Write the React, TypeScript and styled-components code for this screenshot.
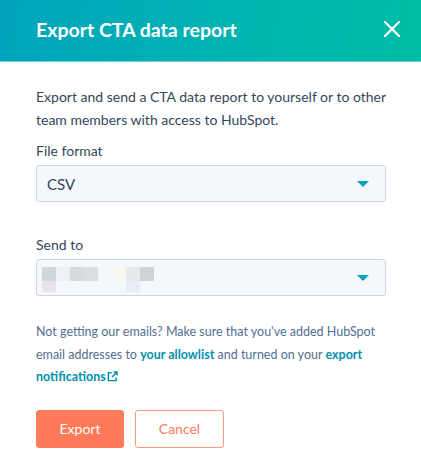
import React from "react";
import styled, { createGlobalStyle } from "styled-components";

const Global = createGlobalStyle`
  html, body { margin: 0; padding: 0; background: #fff; }
  body { font-family: Lato, "Open Sans", sans-serif; color: #33475b; }
  * { box-sizing: border-box; }
`;

const Dialog = styled.div`
  width: 421px;
  height: 470px;
  background: #fff;
  display: flex;
  flex-direction: column;
`;

const Header = styled.div`
  height: 62px;
  flex: none;
  background: linear-gradient(100deg, #00a4bd 0%, #00b5b0 60%, #00bda5 100%);
  border-bottom: 1px solid #6fd0d8;
  display: flex;
  align-items: center;
  justify-content: space-between;
  padding: 0 20px 3px 36px;
`;

const Title = styled.h1`
  margin: 0;
  font-size: 19.5px;
  font-weight: 700;
  color: #fff;
`;

const Close = styled.button`
  border: 0;
  background: transparent;
  padding: 0;
  width: 18px;
  height: 18px;
  display: flex;
  align-items: center;
  justify-content: center;
  cursor: pointer;
`;

const Body = styled.div`
  padding: 23px 35px 0 36px;
  display: flex;
  flex-direction: column;
`;

const Intro = styled.p`
  margin: 0;
  font-size: 14px;
  line-height: 23px;
  color: #33475b;
`;

const Label = styled.div<{ $top: number }>`
  margin-top: ${(p) => p.$top}px;
  font-size: 14px;
  line-height: 20px;
  color: #33475b;
`;

const Select = styled.div`
  margin-top: 4px;
  height: 37px;
  border: 1px solid #cbd6e2;
  border-radius: 3px;
  background: #f5f8fa;
  display: flex;
  align-items: center;
  justify-content: space-between;
  padding: 0 16px 0 10px;
  font-size: 15px;
  color: #33475b;
`;

const Caret = styled.span`
  width: 0;
  height: 0;
  border-left: 6px solid transparent;
  border-right: 6px solid transparent;
  border-top: 6px solid #00a4bd;
  margin-top: 1px;
`;

const Redacted = styled.div`
  align-self: flex-start;
  display: grid;
  grid-template-columns: repeat(8, 14px);
  grid-template-rows: 14px 11px;
  margin-top: 7px;
  margin-left: -5px;
`;

const Px = styled.div<{ $c: string }>`
  background: ${(p) => p.$c};
`;

const Note = styled.p`
  margin: 25px 0 0;
  font-size: 12.5px;
  line-height: 22.5px;
  color: #516f90;
`;

const Link = styled.a`
  color: #0091ae;
  font-weight: 700;
  text-decoration: none;
`;

const ExtIcon = styled.svg`
  margin-left: 1px;
  vertical-align: -1px;
`;

const Actions = styled.div`
  margin-top: 21px;
  display: flex;
  gap: 11px;
`;

const Button = styled.button<{ $primary?: boolean }>`
  height: 38px;
  border-radius: 3px;
  font-family: Lato, "Open Sans", sans-serif;
  font-size: 14px;
  padding: 0;
  cursor: pointer;
  width: ${(p) => (p.$primary ? "88px" : "89px")};
  background: ${(p) => (p.$primary ? "#ff7a59" : "#fff")};
  color: ${(p) => (p.$primary ? "#fff" : "#ff7a59")};
  border: 1px solid ${(p) => (p.$primary ? "#ff7a59" : "#ff9a80")};
`;

const topRow: (string | null)[] = ["#d0d8de", "#eef1f4", "#dcd8e0", "#d9dfe0", null, "#f7f7f2", "#e5e9ed", "#cfd3d6"];
const bottomRow: (string | null)[] = ["#e8e4ea", null, null, null, null, null, "#e6eefa", null];

function RedactedBlock() {
  return (
    <Redacted>
      {[...topRow, ...bottomRow].map((c, i) => (
        <Px key={i} $c={c ?? "transparent"} />
      ))}
    </Redacted>
  );
}

export default function App() {
  return (
    <Dialog>
      <Global />
      <Header>
        <Title>Export CTA data report</Title>
        <Close aria-label="Close">
          <svg width="16" height="16" viewBox="0 0 16 16">
            <path d="M1 1 L15 15 M15 1 L1 15" stroke="#fff" strokeWidth="2.2" strokeLinecap="round" />
          </svg>
        </Close>
      </Header>
      <Body>
        <Intro>
          Export and send a CTA data report to yourself or to other team members with access to HubSpot.
        </Intro>
        <Label $top={10}>File format</Label>
        <Select>
          <span>CSV</span>
          <Caret />
        </Select>
        <Label $top={33}>Send to</Label>
        <Select>
          <RedactedBlock />
          <Caret />
        </Select>
        <Note>
          Not getting our emails? Make sure that you've added HubSpot email addresses to{" "}
          <Link href="#">your allowlist</Link> and turned on your{" "}
          <Link href="#">
            export notifications
            <ExtIcon width="11" height="11" viewBox="0 0 12 12">
              <path d="M5 2 H1.5 V10.5 H10 V7" fill="none" stroke="#0091ae" strokeWidth="1.6" />
              <path d="M7 1 H11 V5 M11 1 L5.5 6.5" fill="none" stroke="#0091ae" strokeWidth="1.6" />
            </ExtIcon>
          </Link>
        </Note>
        <Actions>
          <Button $primary>Export</Button>
          <Button>Cancel</Button>
        </Actions>
      </Body>
    </Dialog>
  );
}
